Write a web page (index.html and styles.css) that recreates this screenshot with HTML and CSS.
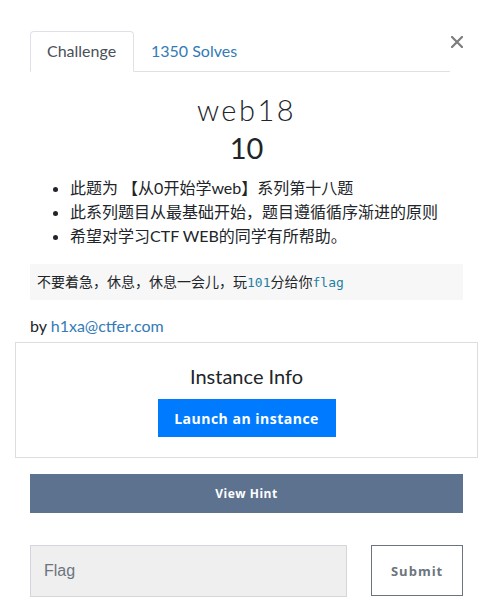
FILE: index.html
```html
<!DOCTYPE html>
<html>
<head>
<meta charset="utf-8">
<link rel="stylesheet" href="styles.css">
</head>
<body>
<div class="modal">
  <div class="top">
    <ul class="tabs">
      <li class="tab active">Challenge</li>
      <li class="tab"><a href="#">1350 Solves</a></li>
    </ul>
    <button class="close" aria-label="Close">
      <svg width="12" height="12" viewBox="0 0 12 12"><path d="M1 1L11 11M11 1L1 11" stroke="#7d7d7d" stroke-width="2.2" stroke-linecap="square"/></svg>
    </button>
  </div>
  <h2 class="name">web18</h2>
  <h3 class="value">10</h3>
  <ul class="desc">
    <li>此题为 【从0开始学web】系列第十八题</li>
    <li>此系列题目从最基础开始，题目遵循循序渐进的原则</li>
    <li>希望对学习CTF WEB的同学有所帮助。</li>
  </ul>
  <pre class="hint-code">不要着急，休息，休息一会儿，玩<code>101</code>分给你<code>flag</code></pre>
  <p class="author">by <a href="#">h1xa@ctfer.com</a></p>
  <div class="instance">
    <h4>Instance Info</h4>
    <button class="launch">Launch an instance</button>
  </div>
  <button class="view-hint">View Hint</button>
  <div class="submit-row">
    <input class="flag" type="text" placeholder="Flag">
    <button class="submit">Submit</button>
  </div>
</div>
</body>
</html>
```
FILE: styles.css
```css
* { box-sizing: border-box; }
html, body { margin: 0; padding: 0; background: #fff; }
body {
  font-family: Lato, "Noto Sans CJK SC", sans-serif;
  font-size: 16px;
  color: #212529;
}
.modal {
  width: 493px;
  padding: 31px 15px 0 15px;
}
.top {
  display: flex;
  align-items: flex-start;
  padding-left: 15px;
}
.tabs {
  list-style: none;
  margin: 0;
  padding: 0;
  display: flex;
  width: 420px;
  border-bottom: 1px solid #dee2e6;
  height: 41px;
}
.tab {
  height: 41px;
  padding: 0 16px;
  line-height: 38px;
  font-size: 16px;
  color: #495057;
  border: 1px solid transparent;
  border-top-left-radius: 4px;
  border-top-right-radius: 4px;
}
.tab.active {
  border-color: #dee2e6 #dee2e6 #fff;
  background: #fff;
  width: 104px;
}
.tab a { color: #337ab7; text-decoration: none; }
.close {
  background: none;
  border: 0;
  padding: 0;
  margin: 5px 0 0 1px;
  width: 12px;
  height: 12px;
  display: flex;
}
.name {
  margin: 21px 0 0 0;
  text-align: center;
  font-family: Lato, sans-serif;
  font-weight: 300;
  font-size: 29px;
  letter-spacing: 2.5px;
  line-height: 34px;
  color: #212529;
}
.value {
  margin: 4px 0 0 0;
  text-align: center;
  font-weight: 400;
  font-size: 29px;
  line-height: 34px;
}
.desc {
  margin: 11px 0 0 15px;
  padding-left: 40px;
  line-height: 24px;
  font-size: 16px;
}
.hint-code {
  margin: 16px 15px 0 15px;
  background: #f7f7f7;
  padding: 7px 7px;
  font-family: "Noto Sans CJK SC", sans-serif;
  font-size: 14px;
  line-height: 20px;
  color: #212529;
}
.hint-code code {
  font-family: "DejaVu Sans Mono", monospace;
  font-size: 13px;
  color: #1f7fa3;
}
.author {
  margin: 15px 15px 0 15px;
  line-height: 22px;
}
.author a { color: #337ab7; text-decoration: none; }
.instance {
  margin-top: 5px;
  border: 1px solid #ddd;
  height: 116px;
  display: flex;
  flex-direction: column;
  align-items: center;
  padding-top: 21px;
}
.instance h4 {
  margin: 0;
  font-weight: 400;
  font-size: 20px;
  line-height: 24px;
}
.launch {
  margin-top: 11px;
  width: 178px;
  height: 38px;
  background: #007bff;
  border: 0;
  color: #fff;
  font-family: "Open Sans", sans-serif;
  font-weight: 700;
  font-size: 14px;
  letter-spacing: 0.5px;
}
.view-hint {
  display: block;
  margin: 16px 15px 0 15px;
  width: 433px;
  height: 39px;
  background: #5c728f;
  border: 0;
  color: #fff;
  font-family: "Open Sans", sans-serif;
  font-weight: 700;
  font-size: 12px;
  letter-spacing: 0.5px;
}
.submit-row {
  display: flex;
  margin: 32px 15px 0 15px;
  gap: 24px;
}
.flag {
  width: 318px;
  height: 52px;
  background: #efefef;
  border: 1px solid #d3d6dc;
  padding: 0 13px;
  font-family: "Liberation Sans", sans-serif;
  font-size: 16px;
  color: #495057;
  outline: none;
}
.flag::placeholder { color: #6c757d; }
.submit {
  width: 92px;
  height: 51px;
  background: #fff;
  border: 1px solid #6c757d;
  color: #6c757d;
  font-family: "Open Sans", sans-serif;
  font-weight: 700;
  font-size: 13px;
  letter-spacing: 1px;
}
```
